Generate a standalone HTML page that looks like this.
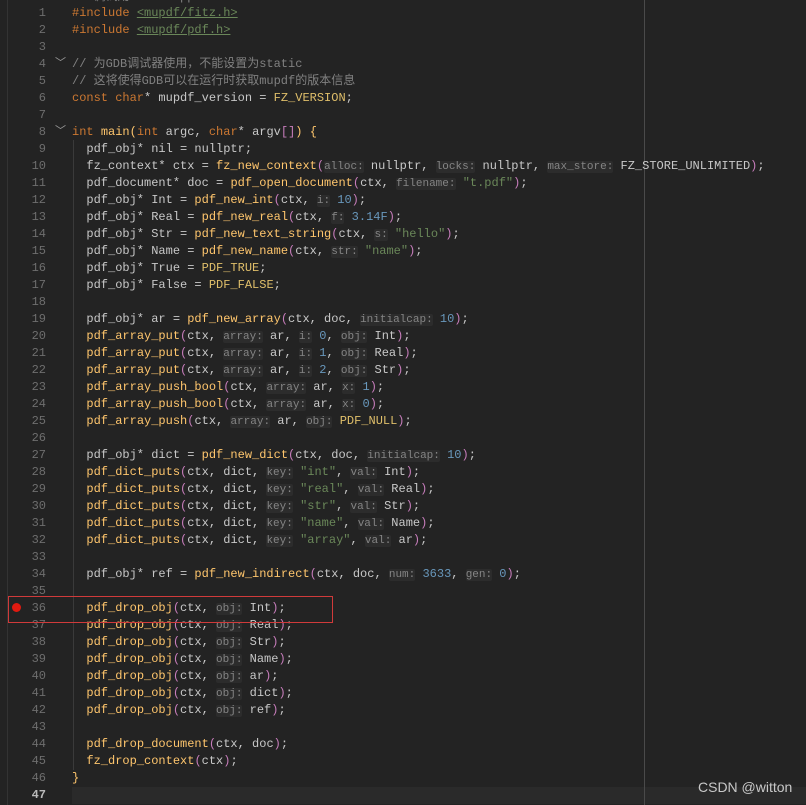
<!DOCTYPE html>
<html><head><meta charset="utf-8"><style>
body{margin:0;width:806px;height:805px;background:#232323;overflow:hidden;position:relative;font-family:"Liberation Mono","Noto Sans CJK SC",monospace;font-size:12px;}
.l{position:absolute;left:0;width:806px;height:17px;line-height:17px;white-space:pre;}
.n{position:absolute;left:0;width:46px;text-align:right;color:#6e6e6e;}
.c{position:absolute;left:72px;color:#c8c8c8;}
.k{color:#cc7832}.f{color:#ffc66d}.s{color:#6a8759}.m{color:#808080}.d{color:#6897bb}.p{color:#c77dbb}.g{color:#e0bf6a}
.h{color:#858585;background:#2c2c2c;border-radius:2px;font-size:11px}
.fold{position:absolute;left:55px;color:#9a9a9a;font-size:11px}
</style></head><body>
<div style="position:absolute;left:72px;top:787px;width:734px;height:17px;background:#2a2a2a"></div>
<div style="position:absolute;left:7px;top:0;width:1px;height:805px;background:#333"></div>
<div style="position:absolute;left:644px;top:0;width:1px;height:805px;background:#4a4a4a"></div>
<div style="position:absolute;left:73px;top:140px;width:1px;height:630px;background:#3a3a3a"></div>
<div class="l" style="top:-11px"><span class="c m">// 调试用 main.cpp</span></div>
<div class="l" style="top:5px"><span class="n">1</span><span class="c"><span class="k">#include</span> <span class="s" style="text-decoration:underline">&lt;mupdf/fitz.h&gt;</span></span></div>
<div class="l" style="top:22px"><span class="n">2</span><span class="c"><span class="k">#include</span> <span class="s" style="text-decoration:underline">&lt;mupdf/pdf.h&gt;</span></span></div>
<div class="l" style="top:39px"><span class="n">3</span></div>
<div class="l" style="top:56px"><span class="n">4</span><span class="fold">﹀</span><span class="c m">// 为GDB调试器使用，不能设置为static</span></div>
<div class="l" style="top:73px"><span class="n">5</span><span class="c m">// 这将使得GDB可以在运行时获取mupdf的版本信息</span></div>
<div class="l" style="top:90px"><span class="n">6</span><span class="c"><span class="k">const char</span>* mupdf_version = <span class="g">FZ_VERSION</span>;</span></div>
<div class="l" style="top:107px"><span class="n">7</span></div>
<div class="l" style="top:124px"><span class="n">8</span><span class="fold">﹀</span><span class="c"><span class="k">int</span> <span class="f">main</span><span class="f">(</span><span class="k">int</span> argc, <span class="k">char</span>* argv<span class="p">[]</span><span class="f">)</span> <span class="f">{</span></span></div>
<div class="l" style="top:141px"><span class="n">9</span><span class="c">  pdf_obj* nil = nullptr;</span></div>
<div class="l" style="top:158px"><span class="n">10</span><span class="c">  fz_context* ctx = <span class="f">fz_new_context</span><span class="p">(</span><span class="h">alloc:</span> nullptr, <span class="h">locks:</span> nullptr, <span class="h">max_store:</span> FZ_STORE_UNLIMITED<span class="p">)</span>;</span></div>
<div class="l" style="top:175px"><span class="n">11</span><span class="c">  pdf_document* doc = <span class="f">pdf_open_document</span><span class="p">(</span>ctx, <span class="h">filename:</span> <span class="s">"t.pdf"</span><span class="p">)</span>;</span></div>
<div class="l" style="top:192px"><span class="n">12</span><span class="c">  pdf_obj* Int = <span class="f">pdf_new_int</span><span class="p">(</span>ctx, <span class="h">i:</span> <span class="d">10</span><span class="p">)</span>;</span></div>
<div class="l" style="top:209px"><span class="n">13</span><span class="c">  pdf_obj* Real = <span class="f">pdf_new_real</span><span class="p">(</span>ctx, <span class="h">f:</span> <span class="d">3.14F</span><span class="p">)</span>;</span></div>
<div class="l" style="top:226px"><span class="n">14</span><span class="c">  pdf_obj* Str = <span class="f">pdf_new_text_string</span><span class="p">(</span>ctx, <span class="h">s:</span> <span class="s">"hello"</span><span class="p">)</span>;</span></div>
<div class="l" style="top:243px"><span class="n">15</span><span class="c">  pdf_obj* Name = <span class="f">pdf_new_name</span><span class="p">(</span>ctx, <span class="h">str:</span> <span class="s">"name"</span><span class="p">)</span>;</span></div>
<div class="l" style="top:260px"><span class="n">16</span><span class="c">  pdf_obj* True = <span class="g">PDF_TRUE</span>;</span></div>
<div class="l" style="top:277px"><span class="n">17</span><span class="c">  pdf_obj* False = <span class="g">PDF_FALSE</span>;</span></div>
<div class="l" style="top:294px"><span class="n">18</span></div>
<div class="l" style="top:311px"><span class="n">19</span><span class="c">  pdf_obj* ar = <span class="f">pdf_new_array</span><span class="p">(</span>ctx, doc, <span class="h">initialcap:</span> <span class="d">10</span><span class="p">)</span>;</span></div>
<div class="l" style="top:328px"><span class="n">20</span><span class="c">  <span class="f">pdf_array_put</span><span class="p">(</span>ctx, <span class="h">array:</span> ar, <span class="h">i:</span> <span class="d">0</span>, <span class="h">obj:</span> Int<span class="p">)</span>;</span></div>
<div class="l" style="top:345px"><span class="n">21</span><span class="c">  <span class="f">pdf_array_put</span><span class="p">(</span>ctx, <span class="h">array:</span> ar, <span class="h">i:</span> <span class="d">1</span>, <span class="h">obj:</span> Real<span class="p">)</span>;</span></div>
<div class="l" style="top:362px"><span class="n">22</span><span class="c">  <span class="f">pdf_array_put</span><span class="p">(</span>ctx, <span class="h">array:</span> ar, <span class="h">i:</span> <span class="d">2</span>, <span class="h">obj:</span> Str<span class="p">)</span>;</span></div>
<div class="l" style="top:379px"><span class="n">23</span><span class="c">  <span class="f">pdf_array_push_bool</span><span class="p">(</span>ctx, <span class="h">array:</span> ar, <span class="h">x:</span> <span class="d">1</span><span class="p">)</span>;</span></div>
<div class="l" style="top:396px"><span class="n">24</span><span class="c">  <span class="f">pdf_array_push_bool</span><span class="p">(</span>ctx, <span class="h">array:</span> ar, <span class="h">x:</span> <span class="d">0</span><span class="p">)</span>;</span></div>
<div class="l" style="top:413px"><span class="n">25</span><span class="c">  <span class="f">pdf_array_push</span><span class="p">(</span>ctx, <span class="h">array:</span> ar, <span class="h">obj:</span> <span class="g">PDF_NULL</span><span class="p">)</span>;</span></div>
<div class="l" style="top:430px"><span class="n">26</span></div>
<div class="l" style="top:447px"><span class="n">27</span><span class="c">  pdf_obj* dict = <span class="f">pdf_new_dict</span><span class="p">(</span>ctx, doc, <span class="h">initialcap:</span> <span class="d">10</span><span class="p">)</span>;</span></div>
<div class="l" style="top:464px"><span class="n">28</span><span class="c">  <span class="f">pdf_dict_puts</span><span class="p">(</span>ctx, dict, <span class="h">key:</span> <span class="s">"int"</span>, <span class="h">val:</span> Int<span class="p">)</span>;</span></div>
<div class="l" style="top:481px"><span class="n">29</span><span class="c">  <span class="f">pdf_dict_puts</span><span class="p">(</span>ctx, dict, <span class="h">key:</span> <span class="s">"real"</span>, <span class="h">val:</span> Real<span class="p">)</span>;</span></div>
<div class="l" style="top:498px"><span class="n">30</span><span class="c">  <span class="f">pdf_dict_puts</span><span class="p">(</span>ctx, dict, <span class="h">key:</span> <span class="s">"str"</span>, <span class="h">val:</span> Str<span class="p">)</span>;</span></div>
<div class="l" style="top:515px"><span class="n">31</span><span class="c">  <span class="f">pdf_dict_puts</span><span class="p">(</span>ctx, dict, <span class="h">key:</span> <span class="s">"name"</span>, <span class="h">val:</span> Name<span class="p">)</span>;</span></div>
<div class="l" style="top:532px"><span class="n">32</span><span class="c">  <span class="f">pdf_dict_puts</span><span class="p">(</span>ctx, dict, <span class="h">key:</span> <span class="s">"array"</span>, <span class="h">val:</span> ar<span class="p">)</span>;</span></div>
<div class="l" style="top:549px"><span class="n">33</span></div>
<div class="l" style="top:566px"><span class="n">34</span><span class="c">  pdf_obj* ref = <span class="f">pdf_new_indirect</span><span class="p">(</span>ctx, doc, <span class="h">num:</span> <span class="d">3633</span>, <span class="h">gen:</span> <span class="d">0</span><span class="p">)</span>;</span></div>
<div class="l" style="top:583px"><span class="n">35</span></div>
<div class="l" style="top:600px"><span class="n">36</span><span class="c">  <span class="f">pdf_drop_obj</span><span class="p">(</span>ctx, <span class="h">obj:</span> Int<span class="p">)</span>;</span></div>
<div class="l" style="top:617px"><span class="n">37</span><span class="c">  <span class="f">pdf_drop_obj</span><span class="p">(</span>ctx, <span class="h">obj:</span> Real<span class="p">)</span>;</span></div>
<div class="l" style="top:634px"><span class="n">38</span><span class="c">  <span class="f">pdf_drop_obj</span><span class="p">(</span>ctx, <span class="h">obj:</span> Str<span class="p">)</span>;</span></div>
<div class="l" style="top:651px"><span class="n">39</span><span class="c">  <span class="f">pdf_drop_obj</span><span class="p">(</span>ctx, <span class="h">obj:</span> Name<span class="p">)</span>;</span></div>
<div class="l" style="top:668px"><span class="n">40</span><span class="c">  <span class="f">pdf_drop_obj</span><span class="p">(</span>ctx, <span class="h">obj:</span> ar<span class="p">)</span>;</span></div>
<div class="l" style="top:685px"><span class="n">41</span><span class="c">  <span class="f">pdf_drop_obj</span><span class="p">(</span>ctx, <span class="h">obj:</span> dict<span class="p">)</span>;</span></div>
<div class="l" style="top:702px"><span class="n">42</span><span class="c">  <span class="f">pdf_drop_obj</span><span class="p">(</span>ctx, <span class="h">obj:</span> ref<span class="p">)</span>;</span></div>
<div class="l" style="top:719px"><span class="n">43</span></div>
<div class="l" style="top:736px"><span class="n">44</span><span class="c">  <span class="f">pdf_drop_document</span><span class="p">(</span>ctx, doc<span class="p">)</span>;</span></div>
<div class="l" style="top:753px"><span class="n">45</span><span class="c">  <span class="f">fz_drop_context</span><span class="p">(</span>ctx<span class="p">)</span>;</span></div>
<div class="l" style="top:770px"><span class="n">46</span><span class="c"><span class="f">}</span></span></div>
<div class="l" style="top:787px"><span class="n" style="color:#bbb;font-weight:bold">47</span></div>
<div style="position:absolute;left:12px;top:603px;width:9px;height:9px;border-radius:50%;background:#e01a10"></div>
<div style="position:absolute;left:8px;top:596px;width:325px;height:27px;border:1px solid #d03a3a;box-sizing:border-box"></div>
<div style="position:absolute;left:698px;top:779px;color:#c8c8c8;font-family:'Liberation Sans',sans-serif;font-size:14px">CSDN @witton</div>
</body></html>
